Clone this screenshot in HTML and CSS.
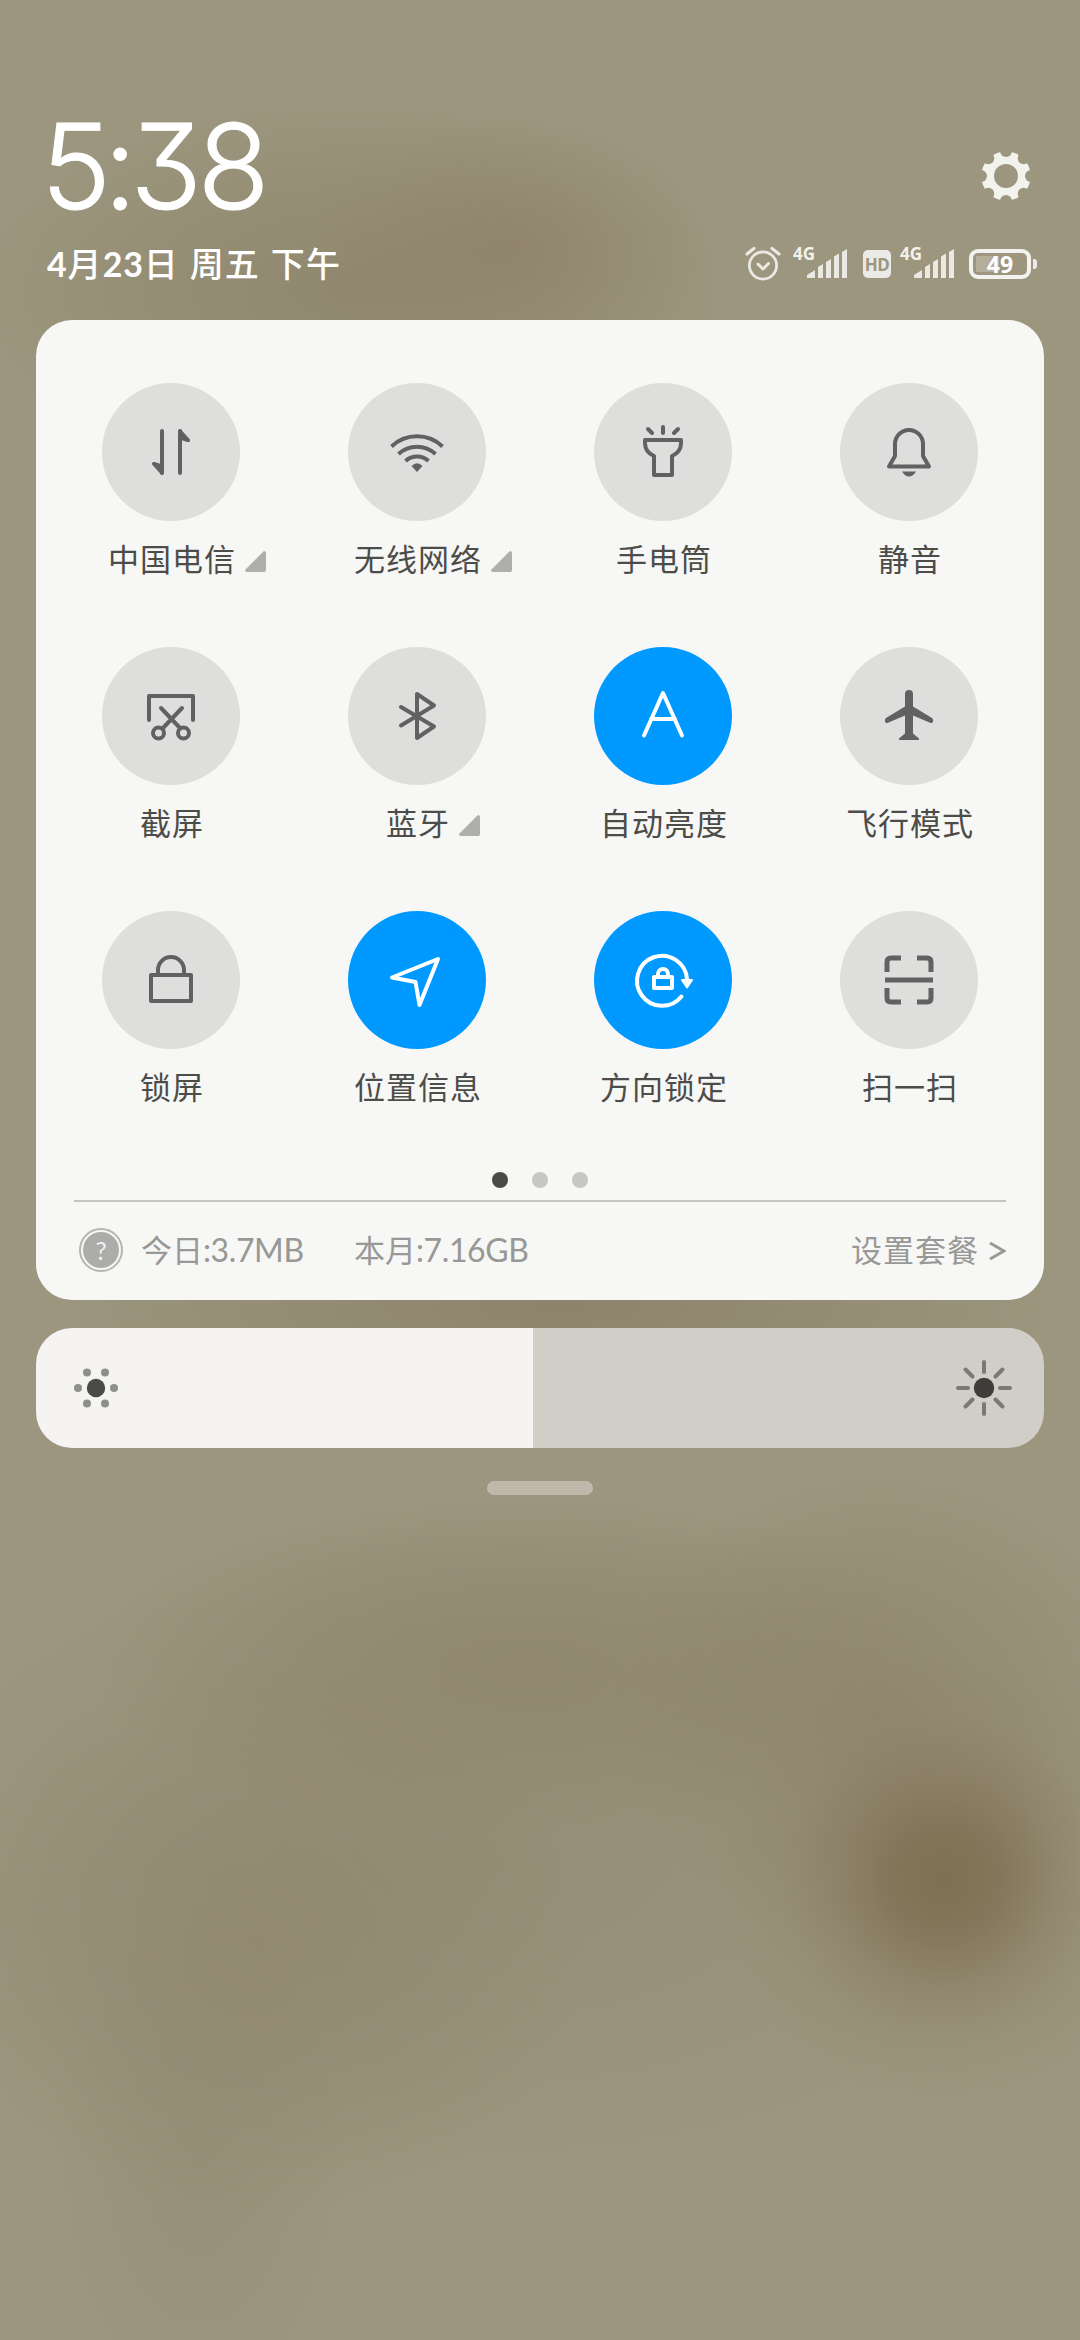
FILE: index.html
```html
<!DOCTYPE html>
<html lang="zh-CN">
<head>
<meta charset="utf-8">
<title>控制中心</title>
<link rel="stylesheet" href="styles.css">
</head>
<body>
<main class="shade">
  <header class="header">
    <div class="header-left">
      <div class="clock">5<span class="colon">:</span>38</div>
      <div class="date"><span class="num">4</span>月<span class="num">23</span>日 周五 下午</div>
    </div>
    <div class="header-right">
      <svg class="gear" viewBox="-25 -25 50 50" width="50" height="50">
        <defs><mask id="gearMask"><rect x="-25" y="-25" width="50" height="50" fill="#fff"/><circle r="12" fill="#000"/>
          <g fill="#000"><circle cy="-25" r="6"/><circle cy="25" r="6"/><circle cx="25" r="6"/><circle cx="-25" r="6"/><circle cx="17.700" cy="17.700" r="6"/><circle cx="-17.700" cy="17.700" r="6"/><circle cx="17.700" cy="-17.700" r="6"/><circle cx="-17.700" cy="-17.700" r="6"/></g></mask></defs>
        <circle r="24.700" mask="url(#gearMask)"/>
      </svg>
      <div class="status">
        <svg class="alarm" width="36" height="36" viewBox="0 0 36 36"><g fill="none" stroke="#ebe9e3" stroke-linecap="round"><circle cx="18" cy="19.500" r="13.600" stroke-width="2.800"/><path d="M13 18l5 5 5.500-5.500" stroke-width="3" stroke-linejoin="round"/><path d="M2 8l7-5.500M34 8l-7-5.500" stroke-width="3.200"/></g></svg>
        <span class="signal"><span class="net">4G</span><svg width="42" height="30" viewBox="0 0 42 30"><path class="bars" d="M1 29v-3l8-5v8zM12 29V18l5-3v14zM20 29V13l5-3v19zM28 29V7.500l5-3V29zM36 29V3l5-3v29z"/></svg></span>
        <span class="hd">HD</span>
        <span class="signal"><span class="net">4G</span><svg width="42" height="30" viewBox="0 0 42 30"><path class="bars" d="M1 29v-3l8-5v8zM12 29V18l5-3v14zM20 29V13l5-3v19zM28 29V7.500l5-3V29zM36 29V3l5-3v29z"/></svg></span>
        <span class="battery"><span class="cell"><span class="level">49</span></span><span class="tip"></span></span>
      </div>
    </div>
  </header>

  <section class="panel">
    <div class="tiles">
      <div class="tile"><div class="disc"><svg viewBox="-32 -32 64 64"><path d="M-9-21V21M9 21V-21"/><path class="solid tight" d="M-9 22L-18 12Q-18.500 10.500-16.500 11L-9 13.500zM9-22L18-12Q18.500-10.500 16.500-11L9-13.500z"/></svg></div>
        <div class="label">中国电信<i class="more"></i></div></div>
      <div class="tile"><div class="disc"><svg viewBox="-32 -32 64 64"><path class="flat" d="M-25.500-5.500A37 37 0 0 1 25.500-5.500M-18.500 2A27 27 0 0 1 18.500 2M-11.500 9A17 17 0 0 1 11.500 9"/><path class="solid" d="M-5.500 14Q0 8.500 5.500 14L0 20z" stroke="none"/></svg></div>
        <div class="label">无线网络<i class="more"></i></div></div>
      <div class="tile"><div class="disc"><svg viewBox="-32 -32 64 64"><path d="M-18-12H18V-9Q18 0 9 4V23H-9V4Q-18 0-18-9zM0-25V-19M-15-23L-11-19M15-23L11-19"/></svg></div>
        <div class="label">手电筒</div></div>
      <div class="tile"><div class="disc"><svg viewBox="-32 -32 64 64"><path d="M-14-8A14 14 0 0 1 14-8V4L20 14.500H-20L-14 4z"/><path class="solid bare" d="M-7 19.500H7Q4 24.500 0 24.500T-7 19.500z"/></svg></div>
        <div class="label">静音</div></div>

      <div class="tile"><div class="disc"><svg viewBox="-32 -32 64 64"><path d="M-22 4V-20H22V4M-10-8L9 12M11-8L-8 12"/><circle cx="-12.500" cy="17" r="5.500"/><circle cx="12.500" cy="17" r="5.500"/></svg></div>
        <div class="label">截屏</div></div>
      <div class="tile"><div class="disc"><svg viewBox="-32 -32 64 64"><path d="M-16-9L17 10.500L0 22V-22L17-10.500L-16 9.500"/></svg></div>
        <div class="label">蓝牙<i class="more"></i></div></div>
      <div class="tile"><div class="disc on"><svg viewBox="-32 -32 64 64"><path d="M-19 19.500L0-23L19 19.500M-12 3H12"/></svg></div>
        <div class="label">自动亮度</div></div>
      <div class="tile"><div class="disc"><svg viewBox="-32 -32 64 64"><path class="solid bare" d="M-4-22Q-4-26 0-26T4-22V-9.500L23 2Q25 4 23.500 6.500Q22.500 7.500 20.500 6.500L4-.5V17.500L10 22.500V24H-10V22.500L-4 17.500V-.5L-20.500 6.500Q-22.500 7.500-23.500 6.500Q-25 4-23 2L-4-9.500z"/></svg></div>
        <div class="label">飞行模式</div></div>

      <div class="tile"><div class="disc"><svg viewBox="-32 -32 64 64"><path d="M-20-5H20V21H-20zM-13-5V-10A13 13 0 0 1 13-10V-5"/></svg></div>
        <div class="label">锁屏</div></div>
      <div class="tile"><div class="disc on"><svg viewBox="-32 -32 64 64"><path d="M-25-2.500L21-21L2.500 25L-1.500 2z"/></svg></div>
        <div class="label">位置信息</div></div>
      <div class="tile"><div class="disc on"><svg viewBox="-32 -32 64 64"><path d="M18.500 16.500A25 25 0 1 1 24-1"/><path class="solid tight" d="M19 0H29L24 7.500z"/><rect x="-9" y="-3" width="18" height="11"/><path d="M-5-3V-6A5 5 0 0 1 5-6V-3"/></svg></div>
        <div class="label">方向锁定</div></div>
      <div class="tile"><div class="disc"><svg viewBox="-32 -32 64 64"><path class="flat" stroke-width="5" d="M-22-8V-18Q-22-22-18-22H-8M8-22H18Q22-22 22-18V-8M-22 8V18Q-22 22-18 22H-8M8 22H18Q22 22 22 18V8M-24 0H24"/></svg></div>
        <div class="label">扫一扫</div></div>
    </div>
    <div class="pager"><i class="dot current"></i><i class="dot"></i><i class="dot"></i></div>
    <div class="usage">
      <span class="help"><span class="help-core">?</span></span>
      <span class="today">今日<span class="num">:3.7MB</span></span>
      <span class="month">本月<span class="num">:7.16GB</span></span>
      <span class="plan">设置套餐<svg width="17" height="20" viewBox="0 0 17 20"><path d="M1 2L15 10L1 18"/></svg></span>
    </div>
  </section>

  <section class="brightness">
    <svg class="dim" width="44" height="44" viewBox="-22 -22 44 44"><circle r="9.200" fill="#4a4a48"/><g fill="#8e8e8b"><circle cx="-18" r="4"/><circle cx="18" r="4"/><circle cx="-9" cy="-15.600" r="4"/><circle cx="9" cy="-15.600" r="4"/><circle cx="-9" cy="15.600" r="4"/><circle cx="9" cy="15.600" r="4"/></g></svg>
    <svg class="bright" width="56" height="56" viewBox="-28 -28 56 56"><circle r="10.200" fill="#3e3d3a"/><path d="M0-26V-16M0 26V16M-26 0H-16M26 0H16M-18.500-18.500L-11.500-11.500M18.500-18.500L11.500-11.500M-18.500 18.500L-11.500 11.500M18.500 18.500L11.500 11.500"/></svg>
  </section>
  <div class="handle"></div>
</main>
</body>
</html>
```

FILE: styles.css
```css
* { box-sizing: border-box; }
body { margin: 0; font-family: "Noto Sans CJK SC", "Noto Sans", sans-serif; }

.shade {
  width: 1080px;
  height: 2340px;
  padding: 110px 36px 0;
  background:
    radial-gradient(circle at 945px 1880px, rgba(122, 107, 76, .85) 0, rgba(123, 108, 78, .75) 50px, rgba(130, 115, 88, .42) 110px, rgba(137, 124, 98, .15) 165px, rgba(137, 124, 98, 0) 225px),
    radial-gradient(ellipse 200px 130px at 510px 245px, rgba(139, 124, 99, .5), rgba(139, 124, 99, .25) 50%, rgba(139, 124, 99, 0)),
    radial-gradient(ellipse 380px 190px at 350px 290px, rgba(139, 130, 104, .75), rgba(139, 130, 104, .4) 50%, rgba(139, 130, 104, 0)),
    radial-gradient(ellipse 440px 170px at 530px 1665px, rgba(139, 129, 104, .65), rgba(139, 129, 104, .4) 50%, rgba(139, 129, 104, 0)),
    radial-gradient(ellipse 270px 240px at 880px 1710px, rgba(139, 129, 104, .65), rgba(139, 129, 104, .38) 50%, rgba(139, 129, 104, 0)),
    radial-gradient(ellipse 330px 280px at 260px 1940px, rgba(141, 131, 106, .6), rgba(141, 131, 106, .35) 50%, rgba(141, 131, 106, 0)),
    radial-gradient(ellipse 150px 260px at 200px 2160px, rgba(141, 132, 108, .35), rgba(141, 132, 108, 0)),
    radial-gradient(ellipse 620px 330px at 480px 1850px, rgba(141, 132, 108, .45), rgba(141, 132, 108, 0)),
    radial-gradient(ellipse 500px 100px at 560px 1310px, rgba(139, 129, 104, .9), rgba(139, 129, 104, .5) 50%, rgba(139, 129, 104, 0)),
    #9c967e;
}

.num { font-family: Lato, "Noto Sans", sans-serif; }

/* header */
.header { display: flex; justify-content: space-between; height: 210px; padding: 0 7px 0 11px; color: #fff; }
.clock { height: 112px; margin-left: -6px; font: 300 118px/112px Inter, sans-serif; font-feature-settings: "cv09"; letter-spacing: -4.5px; -webkit-text-stroke: 1px #fff; }
.colon { margin: 0 -2px 0 -3px; }
.date { height: 50px; margin-top: 16px; font-size: 34px; line-height: 50px; font-weight: 500; letter-spacing: 1.2px; word-spacing: 1.8px; white-space: nowrap; }
.date .num { font-weight: 700; font-size: 34px; letter-spacing: .8px; }
.header-right { display: flex; flex-direction: column; align-items: flex-end; padding-top: 41px; }
.gear { margin-right: 6px; fill: #f3f3ee; }
.status { display: flex; align-items: flex-start; height: 36px; margin-top: 45px; }
.alarm { margin-right: 12px; }
.signal { display: flex; width: 55px; margin-right: 14px; }
.signal .net { width: 13px; font: 700 17px/15px "Noto Sans", sans-serif; color: #f4f2ed; }
.signal svg { flex: none; margin-top: 3px; }
.bars { fill: #ebe9e4; }
.hd { width: 28px; height: 28px; margin: 4px 9px 0 1px; border-radius: 5px; background: #ebeae6; color: #9c967e; font: 700 17px/29px "Noto Sans", sans-serif; letter-spacing: -.5px; text-align: center; }
.battery { display: flex; align-items: center; height: 30px; margin-top: 3px; }
.cell { width: 62px; height: 30px; padding: 2px 3px; border: 4px solid #f4f2ee; border-radius: 9px; background: linear-gradient(#b4ae9b, #b4ae9b) 3px 3px / 23px 16px no-repeat; }
.level { display: block; font: 700 23px/19px "Noto Sans", sans-serif; text-align: center; }
.tip { width: 4px; height: 10px; margin-left: 2px; border-radius: 0 3px 3px 0; background: #ebe9e4; }

/* quick settings */
.panel { height: 980px; padding: 63px 12px 0; border-radius: 36px; background: #f7f7f5; }
.tiles { display: grid; grid-template-columns: repeat(4, 246px); grid-auto-rows: 264px; }
.tile { display: flex; flex-direction: column; align-items: center; }
.disc { display: flex; align-items: center; justify-content: center; width: 138px; height: 138px; border-radius: 50%; background: #dededc; color: #5f6162; }
.disc.on { background: #0099ff; color: #fff; }
.disc svg { width: 64px; height: 64px; fill: none; stroke: currentColor; stroke-width: 4; stroke-linecap: round; stroke-linejoin: round; overflow: visible; }
.disc .solid { fill: currentColor; }
.disc .bare { stroke: none; }
.disc .tight { stroke-width: 2; }
.disc .flat { stroke-linecap: butt; }
.label { position: relative; margin-top: 14px; padding-left: 2px; font-size: 31px; line-height: 46px; letter-spacing: 1px; color: #4c4c49; white-space: nowrap; }
.more { position: absolute; left: 100%; top: 16px; width: 21px; height: 21px; margin-left: 9px; border-radius: 2px; background: #aeaeac; clip-path: polygon(100% 0, 100% 100%, 0 100%, 0 90%, 90% 0); }

.pager { display: flex; justify-content: center; gap: 24px; height: 25px; margin-top: -3px; margin-bottom: 3px; }
.dot { width: 16px; height: 16px; border-radius: 50%; background: #c7c6c4; }
.dot.current { background: #4a4a49; }

.usage { display: flex; align-items: center; height: 98px; margin: 0 26px; padding-left: 5px; border-top: 2px solid #c6c5c3; font-size: 31px; line-height: 46px; color: #989896; white-space: nowrap; }
.usage .num { font-size: 32px; letter-spacing: -.4px; }
.help { width: 44px; height: 44px; padding: 2px; border: 2px solid #b5b5b3; border-radius: 50%; }
.help-core { display: block; height: 36px; border-radius: 50%; background: #acacaa; color: #f0f0ee; font: 400 25px/36px Lato, sans-serif; text-align: center; }
.today, .month, .plan { padding-bottom: 2px; }
.today { width: 213px; margin-left: 18px; }
.plan { display: flex; align-items: center; gap: 10px; margin-left: auto; letter-spacing: 1px; }
.plan svg { margin-top: 3px; fill: none; stroke: #989896; stroke-width: 3; }

/* brightness slider */
.brightness { display: flex; align-items: center; justify-content: space-between; height: 120px; margin-top: 28px; padding: 0 32px 0 38px; border-radius: 36px; background: linear-gradient(to right, #f5f4f2 497px, #d1cec7 497px); }
.bright path { stroke: #7a7975; stroke-width: 4; stroke-linecap: round; }
.handle { width: 106px; height: 14px; margin: 33px auto 0; border-radius: 7px; background: #c0b9ab; }
```
